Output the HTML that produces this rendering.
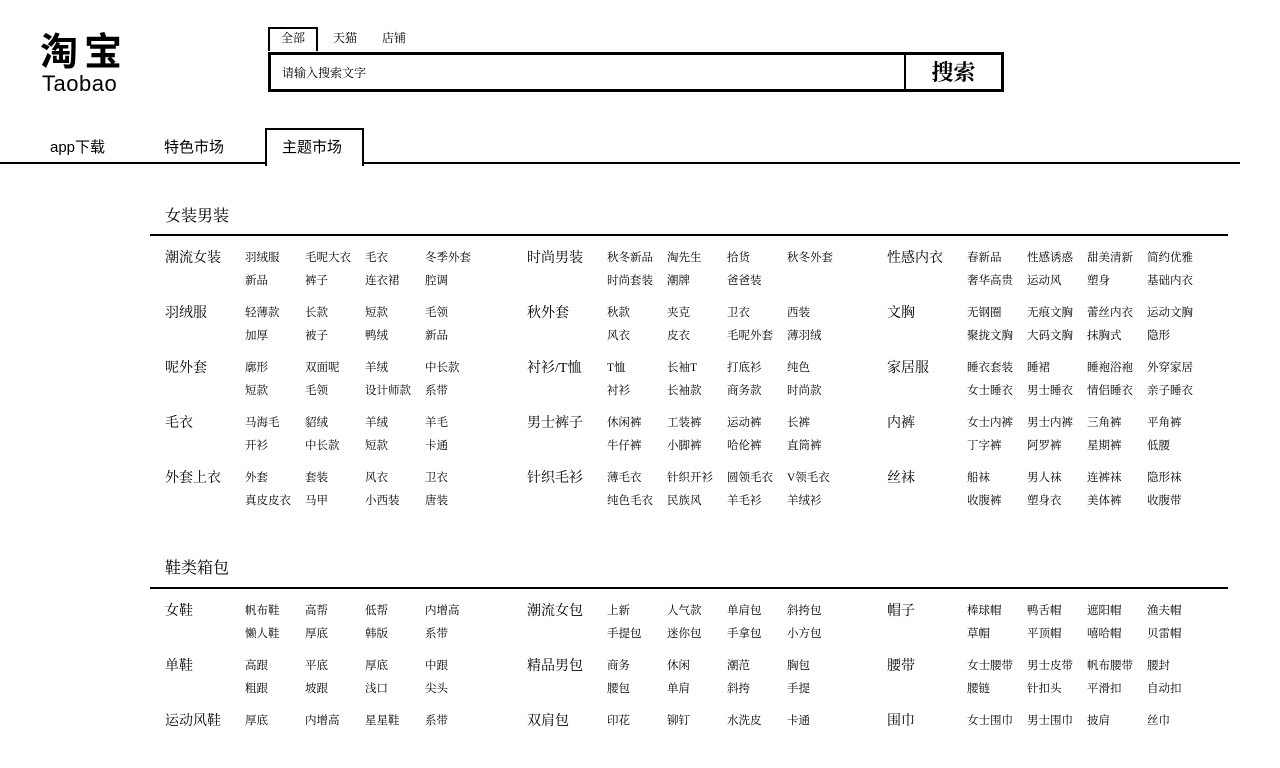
<!DOCTYPE html>
<html><head><meta charset="utf-8"><style>
body{margin:0;width:1280px;height:736px;overflow:hidden;background:#fff;color:#000;font-family:"Liberation Sans","Noto Sans CJK SC",sans-serif;position:relative}
.abs{position:absolute}
.logo{left:40px;top:33px;font-size:38px;font-weight:bold;line-height:40px;letter-spacing:6px}
.logo2{left:42px;top:72px;font-size:22px;line-height:24px;letter-spacing:0.5px}
.tab{top:28px;font-size:12px;line-height:20px;font-family:"Liberation Serif","Noto Serif CJK SC",serif}
.srch{left:268px;top:52px;width:730px;height:34px;border:3px solid #000}
.btn{position:absolute;right:0;top:0;width:95px;height:34px;border-left:2px solid #000;text-align:center;font-size:22px;font-weight:bold;line-height:34px;font-family:"Noto Serif CJK SC",serif}
.nav{top:138px;font-size:15px;line-height:20px}
.sec{left:165px;font-size:16px;font-family:"Liberation Serif","Noto Serif CJK SC",serif}
.hr{left:150px;width:1078px;height:2px;background:#000}
.g{position:absolute;width:340px;font-family:"Liberation Serif","Noto Serif CJK SC",serif}
.c{position:relative;height:55px}
.c b{position:absolute;left:0;top:1px;font-size:14px;font-weight:normal;line-height:16px}
.c i{position:absolute;left:80px;font-style:normal;font-size:11.5px;line-height:14px;white-space:nowrap}
.c i.r1{top:1px}.c i.r2{top:24px}
.c i span{display:inline-block;width:60px}
.c i span:nth-child(4){width:58px}
</style></head><body>
<div class="abs logo">淘宝</div>
<div class="abs logo2">Taobao</div>
<div class="abs" style="left:268px;top:27px;width:46px;height:22px;border:2px solid #000;border-bottom:none"></div>
<div class="abs tab" style="left:281px">全部</div>
<div class="abs tab" style="left:333px">天猫</div>
<div class="abs tab" style="left:382px">店铺</div>
<div class="abs srch"><span class="abs" style="left:11px;top:9px;font-size:12px;font-family:'Noto Serif CJK SC',serif">请输入搜索文字</span><div class="btn">搜索</div></div>
<div class="abs nav" style="left:50px">app下载</div>
<div class="abs nav" style="left:164px">特色市场</div>
<div class="abs" style="left:0;top:162px;width:1240px;height:2px;background:#000"></div>
<div class="abs" style="left:265px;top:128px;width:95px;height:36px;border:2px solid #000;border-bottom:none;background:#fff"></div>
<div class="abs nav" style="left:282px">主题市场</div>

<div class="abs sec" style="top:203px">女装男装</div>
<div class="abs hr" style="top:234px"></div>
<div class="g" style="left:165px;top:250px">
<div class="c"><b>潮流女装</b><i class="r1"><span>羽绒服</span><span>毛呢大衣</span><span>毛衣</span><span>冬季外套</span></i><i class="r2"><span>新品</span><span>裤子</span><span>连衣裙</span><span>腔调</span></i></div>
<div class="c"><b>羽绒服</b><i class="r1"><span>轻薄款</span><span>长款</span><span>短款</span><span>毛领</span></i><i class="r2"><span>加厚</span><span>被子</span><span>鸭绒</span><span>新品</span></i></div>
<div class="c"><b>呢外套</b><i class="r1"><span>廓形</span><span>双面呢</span><span>羊绒</span><span>中长款</span></i><i class="r2"><span>短款</span><span>毛领</span><span>设计师款</span><span>系带</span></i></div>
<div class="c"><b>毛衣</b><i class="r1"><span>马海毛</span><span>貂绒</span><span>羊绒</span><span>羊毛</span></i><i class="r2"><span>开衫</span><span>中长款</span><span>短款</span><span>卡通</span></i></div>
<div class="c"><b>外套上衣</b><i class="r1"><span>外套</span><span>套装</span><span>风衣</span><span>卫衣</span></i><i class="r2"><span>真皮皮衣</span><span>马甲</span><span>小西装</span><span>唐装</span></i></div>
</div>
<div class="g" style="left:527px;top:250px">
<div class="c"><b>时尚男装</b><i class="r1"><span>秋冬新品</span><span>淘先生</span><span>拾货</span><span>秋冬外套</span></i><i class="r2"><span>时尚套装</span><span>潮牌</span><span>爸爸装</span></i></div>
<div class="c"><b>秋外套</b><i class="r1"><span>秋款</span><span>夹克</span><span>卫衣</span><span>西装</span></i><i class="r2"><span>风衣</span><span>皮衣</span><span>毛呢外套</span><span>薄羽绒</span></i></div>
<div class="c"><b>衬衫/T恤</b><i class="r1"><span>T恤</span><span>长袖T</span><span>打底衫</span><span>纯色</span></i><i class="r2"><span>衬衫</span><span>长袖款</span><span>商务款</span><span>时尚款</span></i></div>
<div class="c"><b>男士裤子</b><i class="r1"><span>休闲裤</span><span>工装裤</span><span>运动裤</span><span>长裤</span></i><i class="r2"><span>牛仔裤</span><span>小脚裤</span><span>哈伦裤</span><span>直筒裤</span></i></div>
<div class="c"><b>针织毛衫</b><i class="r1"><span>薄毛衣</span><span>针织开衫</span><span>圆领毛衣</span><span>V领毛衣</span></i><i class="r2"><span>纯色毛衣</span><span>民族风</span><span>羊毛衫</span><span>羊绒衫</span></i></div>
</div>
<div class="g" style="left:887px;top:250px">
<div class="c"><b>性感内衣</b><i class="r1"><span>春新品</span><span>性感诱惑</span><span>甜美清新</span><span>简约优雅</span></i><i class="r2"><span>奢华高贵</span><span>运动风</span><span>塑身</span><span>基础内衣</span></i></div>
<div class="c"><b>文胸</b><i class="r1"><span>无钢圈</span><span>无痕文胸</span><span>蕾丝内衣</span><span>运动文胸</span></i><i class="r2"><span>聚拢文胸</span><span>大码文胸</span><span>抹胸式</span><span>隐形</span></i></div>
<div class="c"><b>家居服</b><i class="r1"><span>睡衣套装</span><span>睡裙</span><span>睡袍浴袍</span><span>外穿家居</span></i><i class="r2"><span>女士睡衣</span><span>男士睡衣</span><span>情侣睡衣</span><span>亲子睡衣</span></i></div>
<div class="c"><b>内裤</b><i class="r1"><span>女士内裤</span><span>男士内裤</span><span>三角裤</span><span>平角裤</span></i><i class="r2"><span>丁字裤</span><span>阿罗裤</span><span>星期裤</span><span>低腰</span></i></div>
<div class="c"><b>丝袜</b><i class="r1"><span>船袜</span><span>男人袜</span><span>连裤袜</span><span>隐形袜</span></i><i class="r2"><span>收腹裤</span><span>塑身衣</span><span>美体裤</span><span>收腹带</span></i></div>
</div>

<div class="abs sec" style="top:555px">鞋类箱包</div>
<div class="abs hr" style="top:587px"></div>
<div class="g" style="left:165px;top:603px">
<div class="c"><b>女鞋</b><i class="r1"><span>帆布鞋</span><span>高帮</span><span>低帮</span><span>内增高</span></i><i class="r2"><span>懒人鞋</span><span>厚底</span><span>韩版</span><span>系带</span></i></div>
<div class="c"><b>单鞋</b><i class="r1"><span>高跟</span><span>平底</span><span>厚底</span><span>中跟</span></i><i class="r2"><span>粗跟</span><span>坡跟</span><span>浅口</span><span>尖头</span></i></div>
<div class="c"><b>运动风鞋</b><i class="r1"><span>厚底</span><span>内增高</span><span>星星鞋</span><span>系带</span></i></div>
</div>
<div class="g" style="left:527px;top:603px">
<div class="c"><b>潮流女包</b><i class="r1"><span>上新</span><span>人气款</span><span>单肩包</span><span>斜挎包</span></i><i class="r2"><span>手提包</span><span>迷你包</span><span>手拿包</span><span>小方包</span></i></div>
<div class="c"><b>精品男包</b><i class="r1"><span>商务</span><span>休闲</span><span>潮范</span><span>胸包</span></i><i class="r2"><span>腰包</span><span>单肩</span><span>斜挎</span><span>手提</span></i></div>
<div class="c"><b>双肩包</b><i class="r1"><span>印花</span><span>铆钉</span><span>水洗皮</span><span>卡通</span></i></div>
</div>
<div class="g" style="left:887px;top:603px">
<div class="c"><b>帽子</b><i class="r1"><span>棒球帽</span><span>鸭舌帽</span><span>遮阳帽</span><span>渔夫帽</span></i><i class="r2"><span>草帽</span><span>平顶帽</span><span>嘻哈帽</span><span>贝雷帽</span></i></div>
<div class="c"><b>腰带</b><i class="r1"><span>女士腰带</span><span>男士皮带</span><span>帆布腰带</span><span>腰封</span></i><i class="r2"><span>腰链</span><span>针扣头</span><span>平滑扣</span><span>自动扣</span></i></div>
<div class="c"><b>围巾</b><i class="r1"><span>女士围巾</span><span>男士围巾</span><span>披肩</span><span>丝巾</span></i></div>
</div>
</body></html>
